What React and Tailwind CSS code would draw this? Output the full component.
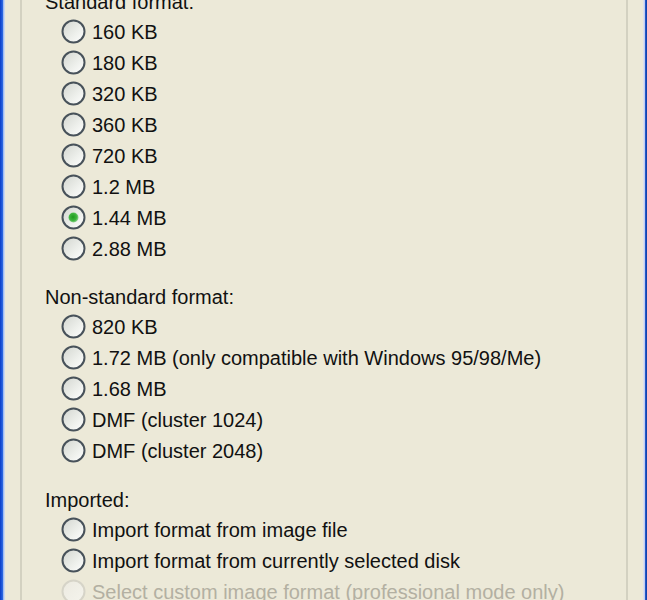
import React from "react";

function Radio({ checked = false, disabled = false, id }) {
  const stroke = disabled ? "#d6d4c8" : "#48525a";
  return (
    <svg width="25" height="25" viewBox="0 0 25 25" className="shrink-0">
      <defs>
        <linearGradient id={`rg${id}`} x1="0" y1="0" x2="1" y2="1">
          <stop offset="0" stopColor={disabled ? "#eceae0" : "#d2d5cf"} />
          <stop offset="0.6" stopColor={disabled ? "#f1f0e8" : "#eef0ec"} />
          <stop offset="1" stopColor={disabled ? "#f4f3ec" : "#ffffff"} />
        </linearGradient>
        <radialGradient id={`dot${id}`} cx="0.45" cy="0.45" r="0.6">
          <stop offset="0" stopColor="#1d9a1d" />
          <stop offset="0.6" stopColor="#3fb43f" />
          <stop offset="1" stopColor="#9edc9e" />
        </radialGradient>
      </defs>
      <circle cx="12.5" cy="12.5" r="11" fill={`url(#rg${id})`} stroke={stroke} strokeWidth="2" />
      {checked && <circle cx="12.5" cy="12.5" r="5" fill={`url(#dot${id})`} />}
    </svg>
  );
}

function Row({ label, checked, disabled, id }) {
  return (
    <div className="h-[31px] flex items-center pl-[39px] shrink-0">
      <Radio checked={checked} disabled={disabled} id={id} />
      <span
        className={`ml-[6px] whitespace-nowrap text-[20px] leading-[20px] ${
          disabled ? "text-[#b3b0a2]" : "text-[#111111]"
        }`}
      >
        {label}
      </span>
    </div>
  );
}

function Heading({ children, className = "" }) {
  return (
    <div className={`h-[29px] flex items-center pl-[23px] shrink-0 ${className}`}>
      <span className="whitespace-nowrap text-[20px] leading-[20px] text-[#111111]">{children}</span>
    </div>
  );
}

export default function App() {
  const standard = ["160 KB", "180 KB", "320 KB", "360 KB", "720 KB", "1.2 MB", "1.44 MB", "2.88 MB"];
  const nonstd = [
    "820 KB",
    "1.72 MB (only compatible with Windows 95/98/Me)",
    "1.68 MB",
    "DMF (cluster 1024)",
    "DMF (cluster 2048)",
  ];
  return (
    <div
      className="w-[647px] h-[600px] overflow-hidden bg-[#ECE9D8] flex"
      style={{ fontFamily: '"Liberation Sans", Arial, sans-serif' }}
    >
      <div className="w-[3px] h-full bg-[linear-gradient(to_right,#0a3cc8,#2f6ce4)]" />
      <div className="w-[2px] h-full bg-[linear-gradient(to_right,#8eaeee,#dce5f4)]" />
      <div className="w-[15px] h-full" />
      <div className="flex-1 h-full border-l-2 border-r-2 border-[#d3d1c1] flex flex-col">
        <Heading className="-mt-[13px]">Standard format:</Heading>
        {standard.map((s, i) => (
          <Row key={s} label={s} checked={s === "1.44 MB"} id={`s${i}`} />
        ))}
        <Heading className="mt-[18px]">Non-standard format:</Heading>
        {nonstd.map((s, i) => (
          <Row key={s} label={s} id={`n${i}`} />
        ))}
        <Heading className="mt-[19px]">Imported:</Heading>
        <Row label="Import format from image file" id="i0" />
        <Row label="Import format from currently selected disk" id="i1" />
        <Row label="Select custom image format (professional mode only)" disabled id="i2" />
      </div>
      <div className="w-[15px] h-full" />
      <div className="w-[2px] h-full bg-[linear-gradient(to_right,#e6e6ef,#b8c8ee)]" />
      <div className="w-[2px] h-full bg-[linear-gradient(to_right,#2a62d8,#0b3a9e)]" />
    </div>
  );
}
